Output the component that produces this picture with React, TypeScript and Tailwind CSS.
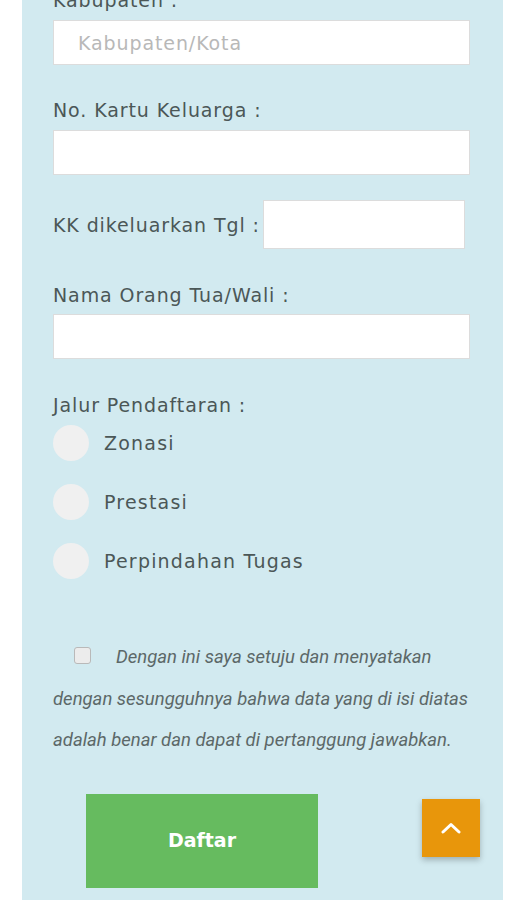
import React from "react";

const labelCls = "block h-[24px] leading-[24px] text-[19px] tracking-[0.9px] text-[#4b5757]";
const inputCls =
  "block h-[45px] w-[417px] border border-[#dcdcdc] bg-white px-[24px] text-[19px] tracking-[0.9px] text-[#555] placeholder:text-[#b8b8b8] outline-none";

const jalur = ["Zonasi", "Prestasi", "Perpindahan Tugas"];

export default function App() {
  return (
    <div className="h-[900px] bg-white pl-[22px] overflow-hidden" style={{ fontFamily: '"DejaVu Sans", sans-serif' }}>
      <div className="w-[481px] h-[960px] bg-[#d2eaf0] pl-[31px]">
        {/* Kabupaten */}
        <div className="-mt-[12px]">
          <label className={labelCls}>Kabupaten :</label>
          <input className={inputCls + " mt-[8px]"} placeholder="Kabupaten/Kota" />
        </div>

        {/* No KK */}
        <div className="mt-[33px]">
          <label className={labelCls}>No. Kartu Keluarga :</label>
          <input className={inputCls + " mt-[8px]"} />
        </div>

        {/* Tgl */}
        <div className="mt-[25px] flex items-center">
          <label className={labelCls + " whitespace-nowrap"}>KK dikeluarkan Tgl :</label>
          <input className="ml-[3px] block h-[49px] w-[202px] border border-[#dcdcdc] bg-white outline-none" />
        </div>

        {/* Nama ortu */}
        <div className="mt-[34px]">
          <label className={labelCls}>Nama Orang Tua/Wali :</label>
          <input className={inputCls + " mt-[7px]"} />
        </div>

        {/* Jalur */}
        <div className="mt-[34px]">
          <label className={labelCls}>Jalur Pendaftaran :</label>
          <div className="mt-[8px] flex flex-col gap-[23px]">
            {jalur.map((j) => (
              <div key={j} className="flex items-center">
                <span className="block h-[36px] w-[36px] rounded-full bg-[#f0f0f0]" />
                <span className="ml-[15px] text-[19px] tracking-[1.2px] text-[#4b5757]">{j}</span>
              </div>
            ))}
          </div>
        </div>

        {/* Pernyataan */}
        <p
          className="mt-[58px] w-[425px] text-[18.5px] italic leading-[41.5px] text-[#5c6868]"
          style={{ fontFamily: 'Roboto, "Liberation Sans", sans-serif' }}
        >
          <span className="ml-[21px] mr-[25px] inline-block h-[17px] w-[17px] rounded-[3px] border border-[#b9b9b9] bg-[#ececec] align-[-1px]" />
          Dengan ini saya setuju dan menyatakan
          <br />
          dengan sesungguhnya bahwa data yang di isi diatas
          <br />
          adalah benar dan dapat di pertanggung jawabkan.
        </p>

        <button className="mt-[32px] ml-[33px] block h-[94px] w-[232px] bg-[#66bb5f] text-[19px] font-bold text-white">
          Daftar
        </button>
      </div>

      {/* back to top */}
      <button className="fixed right-[44px] bottom-[43px] flex h-[58px] w-[58px] items-center justify-center bg-[#e8960b] shadow-[0_3px_6px_rgba(0,0,0,0.25)]">
        <svg width="20" height="12" viewBox="0 0 20 12" fill="none">
          <path d="M2 10 L10 2.5 L18 10" stroke="white" strokeWidth="3" strokeLinecap="round" strokeLinejoin="round" />
        </svg>
      </button>
    </div>
  );
}
